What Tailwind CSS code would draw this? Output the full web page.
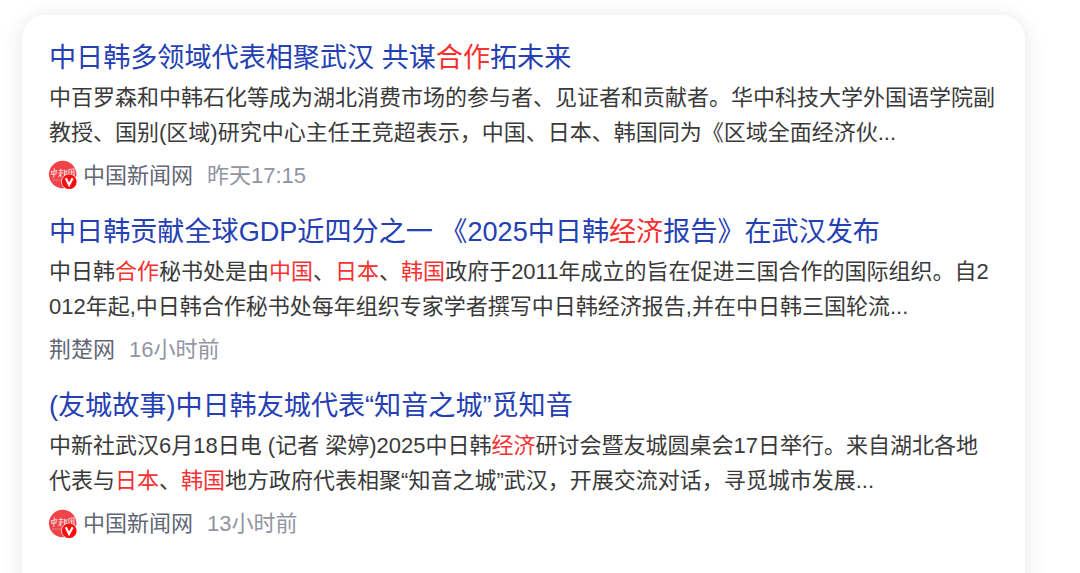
<!DOCTYPE html>
<html lang="zh-CN">
<head>
    <meta charset="UTF-8">
    <meta name="viewport" content="width=device-width, initial-scale=1.0">
    <title>中日韩合作</title>
    <script src="https://cdn.jsdelivr.net/npm/@tailwindcss/browser@4"></script>
    <style>
        body {
            font-family: 'Liberation Sans', 'Noto Sans CJK SC', sans-serif;
        }
        em {
            font-style: normal;
            color: #f73131;
        }
    </style>
</head>
<body class="bg-white h-[573px] overflow-hidden pt-[15px] pl-[22px]">
    <main class="w-[1003px] h-[600px] rounded-t-[24px] bg-white pl-[27px] pt-[23px] shadow-[0_2px_22px_rgba(0,0,0,0.1)] whitespace-nowrap">
        <article class="h-[174px]">
            <h3 class="text-[27.1px] leading-[40px] text-[#2440b3]">中日韩多领域代表相聚武汉 共谋<em>合作</em>拓未来</h3>
            <p class="mt-[1.5px] text-[22px] leading-[35.7px] text-[#3a3a3a]">中百罗森和中韩石化等成为湖北消费市场的参与者、见证者和贡献者。华中科技大学外国语学院副<br>教授、国别(区域)研究中心主任王竞超表示，中国、日本、韩国同为《区域全面经济伙...</p>
            <div class="mt-[7px] h-[36px] flex items-center text-[22px] leading-[36px]">
                <svg class="w-[28px] h-[30px] mr-[6px] mb-[2px] shrink-0" viewBox="0 0 28 30">
                    <circle cx="13.7" cy="14.5" r="13.7" fill="#ef4349"/>
                    <g fill="none" stroke="#fbc9c8" stroke-width="1.1" stroke-linecap="round">
                        <path d="M2.5 11.5l5-1-.6 3.4-4 .5zM5.3 8.5l-.6 9"/>
                        <path d="M10 10.5h4M9.7 13h4.4M11.8 9v8M11.6 14l-2 2.5M15.5 10v6.5M15.6 11.5l2.5-.7M17.2 11.5v5"/>
                        <path d="M19.8 10v7.5M20 9.5l5-.7v8M21.5 12h2.5M22.6 10.5v5"/>
                    </g>
                    <path d="M3 20h9" stroke="#f58a8b" stroke-width=".8"/>
                    <circle cx="20.2" cy="21.7" r="8" fill="#fff"/>
                    <circle cx="20.2" cy="21.7" r="7.4" fill="#fe0b10"/>
                    <path d="M16.8 18.2l3.3 6.6 3.5-6.6" fill="none" stroke="#fff" stroke-width="2.2"/>
                </svg>
                <span class="text-[#626675]">中国新闻网</span>
                <span class="ml-[14px] text-[#9195a3]">昨天17:15</span>
            </div>
        </article>
        <article class="h-[174px]">
            <h3 class="text-[27.1px] leading-[40px] text-[#2440b3]">中日韩贡献全球GDP近四分之一 《2025中日韩<em>经济</em>报告》在武汉发布</h3>
            <p class="mt-[1.5px] text-[22px] leading-[35.7px] text-[#3a3a3a]">中日韩<em>合作</em>秘书处是由<em>中国</em>、<em>日本</em>、<em>韩国</em>政府于2011年成立的旨在促进三国合作的国际组织。自2<br>012年起,中日韩合作秘书处每年组织专家学者撰写中日韩经济报告,并在中日韩三国轮流...</p>
            <div class="mt-[7px] h-[36px] flex items-center text-[22px] leading-[36px]">
                <span class="text-[#626675]">荆楚网</span>
                <span class="ml-[14px] text-[#9195a3]">16小时前</span>
            </div>
        </article>
        <article class="h-[174px]">
            <h3 class="text-[27.1px] leading-[40px] text-[#2440b3]">(友城故事)中日韩友城代表“知音之城”觅知音</h3>
            <p class="mt-[1.5px] text-[22px] leading-[35.7px] text-[#3a3a3a]">中新社武汉6月18日电 (记者 梁婷)2025中日韩<em>经济</em>研讨会暨友城圆桌会17日举行。来自湖北各地<br>代表与<em>日本</em>、<em>韩国</em>地方政府代表相聚“知音之城”武汉，开展交流对话，寻觅城市发展...</p>
            <div class="mt-[7px] h-[36px] flex items-center text-[22px] leading-[36px]">
                <svg class="w-[28px] h-[30px] mr-[6px] shrink-0" viewBox="0 0 28 30">
                    <circle cx="13.7" cy="14.5" r="13.7" fill="#ef4349"/>
                    <g fill="none" stroke="#fbc9c8" stroke-width="1.1" stroke-linecap="round">
                        <path d="M2.5 11.5l5-1-.6 3.4-4 .5zM5.3 8.5l-.6 9"/>
                        <path d="M10 10.5h4M9.7 13h4.4M11.8 9v8M11.6 14l-2 2.5M15.5 10v6.5M15.6 11.5l2.5-.7M17.2 11.5v5"/>
                        <path d="M19.8 10v7.5M20 9.5l5-.7v8M21.5 12h2.5M22.6 10.5v5"/>
                    </g>
                    <path d="M3 20h9" stroke="#f58a8b" stroke-width=".8"/>
                    <circle cx="20.2" cy="21.7" r="8" fill="#fff"/>
                    <circle cx="20.2" cy="21.7" r="7.4" fill="#fe0b10"/>
                    <path d="M16.8 18.2l3.3 6.6 3.5-6.6" fill="none" stroke="#fff" stroke-width="2.2"/>
                </svg>
                <span class="text-[#626675]">中国新闻网</span>
                <span class="ml-[14px] text-[#9195a3]">13小时前</span>
            </div>
        </article>
    </main>
</body>
</html>
